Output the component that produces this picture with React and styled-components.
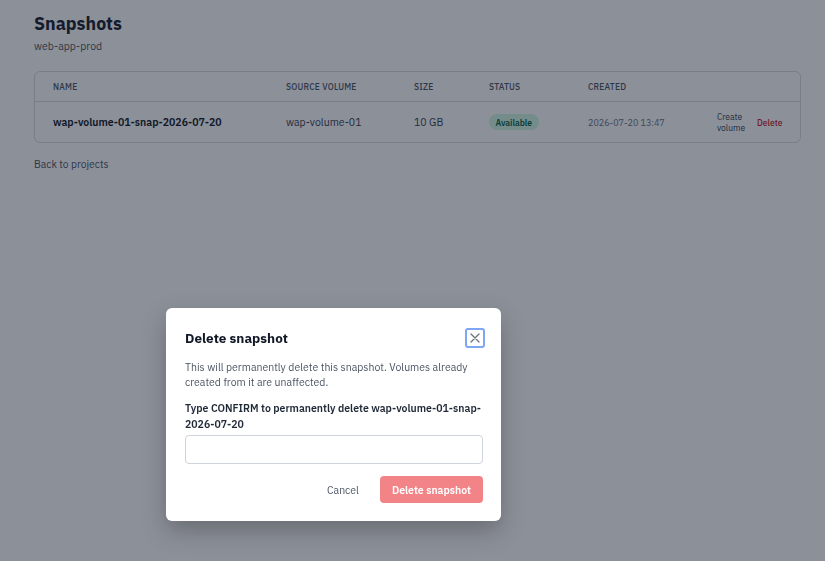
import React from 'react';
import styled, { createGlobalStyle } from 'styled-components';

const GlobalStyle = createGlobalStyle`
  html, body {
    margin: 0;
    padding: 0;
    background: #ffffff;
  }
  body {
    font-family: "IBM Plex Sans", Inter, "Noto Sans", sans-serif;
    color: #111827;
  }
  * { box-sizing: border-box; }
`;

const Page = styled.div`
  width: 825px;
  min-height: 561px;
  padding: 12px 24px 0 34px;
`;

const Title = styled.h1`
  margin: 0;
  font-size: 17.8px;
  font-weight: 700;
  line-height: 24px;
  color: #1a1f2e;
`;

const Subtitle = styled.div`
  margin-top: 3px;
  font-size: 10.5px;
  color: #4b5563;
`;

const Card = styled.div`
  margin-top: 18px;
  width: 767px;
  border: 1px solid #d9dce2;
  border-radius: 6px;
  overflow: hidden;
`;

const Row = styled.div`
  display: grid;
  grid-template-columns: 233px 128px 75px 99px 129px 1fr;
  align-items: center;
  padding: 0 18px;
  height: ${p => (p.$head ? '30px' : '40px')};
  border-bottom: ${p => (p.$head ? '1px solid #d9dce2' : 'none')};
`;

const HeadCell = styled.div`
  font-size: 8.5px;
  font-weight: 500;
  letter-spacing: 0.2px;
  text-transform: uppercase;
  color: #4b5563;
`;

const Cell = styled.div`
  font-size: ${p => (p.$small ? '9px' : '10.5px')};
  font-weight: ${p => (p.$bold ? 600 : 400)};
  color: ${p => p.$color || '#374151'};
`;

const Badge = styled.span`
  display: inline-block;
  padding: 2.5px 6.5px;
  border-radius: 999px;
  background: #d1fae5;
  color: #065f46;
  font-size: 8.5px;
  font-weight: 600;
`;

const Actions = styled.div`
  display: flex;
  align-items: center;
  gap: 9px;
`;

const LinkButton = styled.button`
  border: none;
  background: none;
  padding: 0;
  font: inherit;
  font-size: 8.5px;
  line-height: 11px;
  font-weight: ${p => (p.$danger ? 500 : 400)};
  text-align: left;
  width: ${p => p.$w || 'auto'};
  color: ${p => (p.$danger ? '#c81e1e' : '#374151')};
  cursor: pointer;
`;

const BackLink = styled.a`
  display: inline-block;
  margin-top: 14px;
  font-size: 10.3px;
  color: #4b5563;
  text-decoration: none;
`;

const Overlay = styled.div`
  position: fixed;
  inset: 0;
  background: rgba(15, 23, 42, 0.48);
  display: flex;
  align-items: flex-start;
  justify-content: flex-start;
  padding: 308px 0 0 166px;
`;

const Modal = styled.div`
  width: 335px;
  background: #ffffff;
  border-radius: 6px;
  box-shadow: 0 10px 25px rgba(0, 0, 0, 0.25);
  padding: 20px 18px 18px 19px;
`;

const ModalHeader = styled.div`
  display: flex;
  justify-content: space-between;
  align-items: center;
`;

const ModalTitle = styled.h2`
  margin: 0;
  font-size: 13.5px;
  font-weight: 700;
  color: #111827;
`;

const CloseButton = styled.button`
  width: 20px;
  height: 20px;
  margin-right: -2px;
  padding: 0;
  display: flex;
  align-items: center;
  justify-content: center;
  border: 2px solid #7ea6f4;
  border-radius: 3px;
  background: #ffffff;
  color: #6b7280;
  cursor: pointer;
`;

const Body = styled.p`
  margin: 12px 0 0;
  font-size: 10.5px;
  line-height: 15px;
  color: #4b5563;
`;

const Label = styled.label`
  display: block;
  margin-top: 10px;
  font-size: 10.5px;
  line-height: 16px;
  font-weight: 600;
  color: #1f2937;
`;

const Input = styled.input`
  display: block;
  width: 100%;
  height: 29px;
  margin-top: 3px;
  border: 1px solid #cfd3da;
  border-radius: 4px;
  font: inherit;
  font-size: 11px;
  padding: 0 8px;
`;

const Footer = styled.div`
  display: flex;
  justify-content: flex-end;
  align-items: center;
  gap: 21px;
  margin-top: 12px;
`;

const GhostButton = styled.button`
  border: none;
  background: none;
  padding: 0;
  font: inherit;
  font-size: 10.5px;
  color: #4b5563;
`;

const DangerButton = styled.button`
  border: none;
  border-radius: 4px;
  height: 27px;
  padding: 0 12px;
  background: #f28488;
  color: #ffffff;
  font: inherit;
  font-size: 10.5px;
  font-weight: 600;
`;

export default function App() {
  return (
    <>
      <GlobalStyle />
      <Page>
        <Title>Snapshots</Title>
        <Subtitle>web-app-prod</Subtitle>
        <Card>
          <Row $head>
            <HeadCell>Name</HeadCell>
            <HeadCell>Source volume</HeadCell>
            <HeadCell>Size</HeadCell>
            <HeadCell>Status</HeadCell>
            <HeadCell>Created</HeadCell>
            <HeadCell />
          </Row>
          <Row>
            <Cell $bold $color="#111827">wap-volume-01-snap-2026-07-20</Cell>
            <Cell>wap-volume-01</Cell>
            <Cell>10 GB</Cell>
            <Cell><Badge>Available</Badge></Cell>
            <Cell $small $color="#6b7280">2026-07-20 13:47</Cell>
            <Actions>
              <LinkButton $w="31px">Create volume</LinkButton>
              <LinkButton $danger>Delete</LinkButton>
            </Actions>
          </Row>
        </Card>
        <BackLink href="#">Back to projects</BackLink>
      </Page>
      <Overlay>
        <Modal>
          <ModalHeader>
            <ModalTitle>Delete snapshot</ModalTitle>
            <CloseButton aria-label="Close">
              <svg width="10" height="10" viewBox="0 0 10 10">
                <path d="M1 1L9 9M9 1L1 9" stroke="currentColor" strokeWidth="1.3" strokeLinecap="round" />
              </svg>
            </CloseButton>
          </ModalHeader>
          <Body>This will permanently delete this snapshot. Volumes already created from it are unaffected.</Body>
          <Label>Type CONFIRM to permanently delete wap-volume-01-snap-2026-07-20</Label>
          <Input />
          <Footer>
            <GhostButton>Cancel</GhostButton>
            <DangerButton disabled>Delete snapshot</DangerButton>
          </Footer>
        </Modal>
      </Overlay>
    </>
  );
}
